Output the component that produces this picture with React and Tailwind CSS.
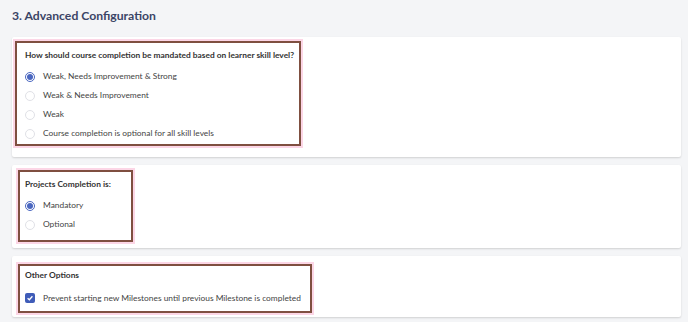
import React from 'react';

function Radio({ checked, label }) {
  return (
    <div className="flex items-center h-[19px] gap-2">
      {checked ? (
        <span className="w-[10px] h-[10px] rounded-full border border-[#4a67c0] flex items-center justify-center bg-white">
          <span className="w-[6px] h-[6px] rounded-full bg-[#4a67c0]" />
        </span>
      ) : (
        <span className="w-[10px] h-[10px] rounded-full border border-[#e0e1e6] bg-white" />
      )}
      <span className="text-[8.4px] whitespace-nowrap text-[#444]">{label}</span>
    </div>
  );
}

function Card({ className, children }) {
  return (
    <div className={`bg-white rounded-[2px] shadow-[0_1px_2px_rgba(0,0,0,0.15)] ${className}`}>
      {children}
    </div>
  );
}

// annotation frame around each question
function Marked({ className, children }) {
  return (
    <div className={`border-2 border-[#7f4f40] shadow-[0_0_0_2px_#fcd6e6] ${className}`}>
      {children}
    </div>
  );
}

export default function App() {
  return (
    <div
      className="w-[688px] h-[322px] overflow-hidden bg-[#f4f5f7] pl-3 pr-[7px]"
      style={{ fontFamily: 'Lato, "Open Sans", sans-serif' }}
    >
      <h2 className="pt-[7px] h-[37px] text-[12.2px] leading-[18px] font-bold text-[#3b4466]">
        3. Advanced Configuration
      </h2>

      <Card className="h-[120px] pt-[4px] pl-[3px]">
        <Marked className="w-[286px] h-[105px] pl-[8px] pt-[5px]">
          <p className="text-[8.4px] leading-[14px] font-bold whitespace-nowrap text-[#333]">
            How should course completion be mandated based on learner skill level?
          </p>
          <div className="mt-[5px]">
            <Radio checked label="Weak, Needs Improvement & Strong" />
            <Radio label="Weak & Needs Improvement" />
            <Radio label="Weak" />
            <Radio label="Course completion is optional for all skill levels" />
          </div>
        </Marked>
      </Card>

      <Card className="mt-[8px] h-[83px] pt-[5px] pl-[6px]">
        <Marked className="w-[115px] h-[72px] pl-[5px] pt-[5px]">
          <p className="text-[8.4px] leading-[14px] font-bold whitespace-nowrap text-[#333]">Projects Completion is:</p>
          <div className="mt-[5px]">
            <Radio checked label="Mandatory" />
            <Radio label="Optional" />
          </div>
        </Marked>
      </Card>

      <Card className="mt-[8px] h-[61px] pt-[8px] pl-[6px]">
        <Marked className="w-[294px] h-[49px] pl-[5px] pt-[2px]">
          <p className="text-[8.4px] leading-[14px] font-bold whitespace-nowrap text-[#333]">Other Options</p>
          <div className="mt-[8px] flex items-center gap-2 h-[16px]">
            <span className="w-[10px] h-[10px] rounded-[2px] bg-[#3f5cb8] flex items-center justify-center">
              <svg viewBox="0 0 10 10" className="w-[8px] h-[8px]" fill="none" stroke="white" strokeWidth="1.6">
                <path d="M2 5.2 L4.2 7.2 L8 2.8" />
              </svg>
            </span>
            <span className="text-[8.4px] whitespace-nowrap text-[#444]">
              Prevent starting new Milestones until previous Milestone is completed
            </span>
          </div>
        </Marked>
      </Card>
    </div>
  );
}
